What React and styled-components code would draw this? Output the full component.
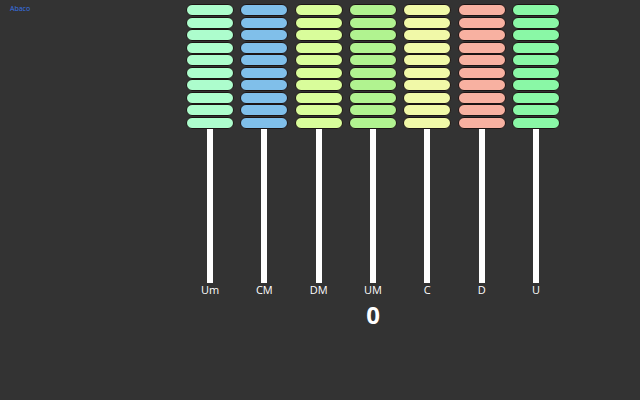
import React from 'react';
import styled, { createGlobalStyle } from 'styled-components';

const GlobalStyle = createGlobalStyle`
    html, body {
        margin: 0;
        padding: 0;
        background: #333333;
        width: 640px;
        height: 400px;
        overflow: hidden;
    }
`

const Page = styled.div`
    position: relative;
    width: 640px;
    height: 400px;
    background: #333333;
    font-family: "Liberation Sans", Arial, sans-serif;
`

const Title = styled.div`
    position: absolute;
    left: 10px;
    top: 4px;
    font-family: "Open Sans", "Liberation Sans", sans-serif;
    font-size: 7px;
    color: #3774ea;
`

const Board = styled.div`
    display: flex;
    flex-direction: column;
    align-items: center;
    width: 374px;
    margin-left: 186px;
    padding-top: 4px;
`

const Row = styled.div`
    display: flex;
    gap: 6.33px;
`

const Column = styled.div`
    display: flex;
    flex-direction: column;
    align-items: center;
    width: 48px;
`

const Beads = styled.div`
    display: flex;
    flex-direction: column;
    gap: 0.55px;
`

const Bead = styled.div`
    box-sizing: border-box;
    width: 48px;
    height: 12px;
    border: 1px solid #1c1414;
    border-radius: 6px;
    background: ${p => p.color};
`

const Rod = styled.div`
    width: 6px;
    height: 154px;
    margin-top: 0.5px;
    background: #ffffff;
`

const Label = styled.div`
    font-family: "Open Sans", "Liberation Sans", sans-serif;
    font-size: 11px;
    line-height: 14px;
    color: #ffffff;
`

const Total = styled.div`
    margin-top: 4px;
    font-family: "Open Sans", "Liberation Sans", sans-serif;
    font-weight: bold;
    font-size: 24px;
    line-height: 28px;
    color: #ffffff;
`

const columns = [
    { label: 'Um', color: '#adfdcd' },
    { label: 'CM', color: '#80bfea' },
    { label: 'DM', color: '#d9fd9b' },
    { label: 'UM', color: '#b1f390' },
    { label: 'C', color: '#f1f9a8' },
    { label: 'D', color: '#f8b1a1' },
    { label: 'U', color: '#8af8a6' },
]

const App = () => {
    return (
        <Page>
            <GlobalStyle />
            <Title>Abaco</Title>
            <Board>
                <Row>
                    {columns.map(col => (
                        <Column key={col.label}>
                            <Beads>
                                {Array.from({ length: 10 }).map((_, i) => (
                                    <Bead key={i} color={col.color} />
                                ))}
                            </Beads>
                            <Rod />
                            <Label>{col.label}</Label>
                        </Column>
                    ))}
                </Row>
                <Total>0</Total>
            </Board>
        </Page>
    )
}

export default App
